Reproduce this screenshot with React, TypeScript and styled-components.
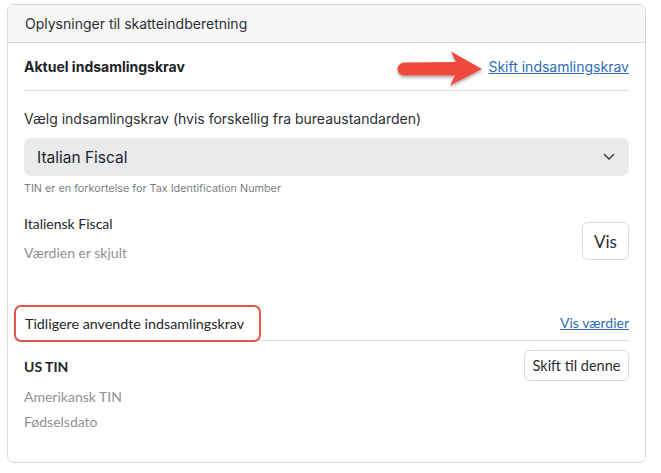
import React from "react";
import styled, { createGlobalStyle } from "styled-components";

const Global = createGlobalStyle`
  html, body { margin: 0; padding: 0; background: #ffffff; }
  body { font-family: Inter, "Noto Sans", sans-serif; color: #1f2328; }
`;

const Page = styled.div`
  padding: 4px 15px 10px 7px;
`;

const Card = styled.div`
  border: 1px solid #d6d8db;
  border-radius: 7px;
  background: #fff;
  overflow: hidden;
  height: 459px;
  box-sizing: border-box;
`;

const Header = styled.div`
  background: #f7f7f8;
  border-bottom: 1px solid #d6d8db;
  height: 37px;
  display: flex;
  align-items: center;
  padding-left: 17px;
  font-size: 14px;
  color: #2b2f33;
`;

const Body = styled.div`
  padding: 0 16px 0 16px;
`;

const TitleRow = styled.div`
  display: flex;
  justify-content: space-between;
  align-items: center;
  height: 47px;
  border-bottom: 1px solid #dcdee0;
  position: relative;
`;

const Strong = styled.div`
  font-weight: 700;
  font-size: 14px;
  color: #202428;
`;

const Link = styled.a<{ $lato?: boolean }>`
  color: #2d6db5;
  text-decoration: underline;
  font-size: 14px;
  font-family: ${(p) => (p.$lato ? 'Lato, "Noto Sans", sans-serif' : "inherit")};
  cursor: pointer;
  position: relative;
`;

const Arrow = styled.svg`
  position: absolute;
  left: 370px;
  top: 4px;
  overflow: visible;
`;

const FieldLabel = styled.div`
  font-size: 14px;
  color: #2b2f33;
  margin-top: 19px;
  height: 18px;
  line-height: 18px;
`;

const Select = styled.div`
  margin-top: 10px;
  height: 38px;
  border-radius: 7px;
  background: #e9eaec;
  display: flex;
  align-items: center;
  justify-content: space-between;
  padding: 0 14px 0 13px;
  font-size: 15.5px;
  color: #1f2328;
`;

const Hint = styled.div`
  font-size: 10.8px;
  color: #7b7f84;
  margin-top: 7px;
  height: 12px;
  line-height: 12px;
`;

const Lower = styled.div`
  font-family: Lato, "Noto Sans", sans-serif;
`;

const ValueRow = styled.div`
  display: flex;
  justify-content: space-between;
  align-items: flex-start;
  margin-top: 20px;
  height: 81px;
`;

const Stack = styled.div`
  display: flex;
  flex-direction: column;
`;

const ItemTitle = styled.div<{ $bold?: boolean }>`
  font-size: 14px;
  font-weight: ${(p) => (p.$bold ? 700 : 400)};
  color: #23272b;
  height: 18px;
  line-height: 18px;
`;

const Muted = styled.div<{ $gap?: number }>`
  font-size: 14px;
  color: #8e9296;
  margin-top: ${(p) => p.$gap ?? 11}px;
  height: 18px;
  line-height: 18px;
`;

const Button = styled.button<{ $size?: number }>`
  font-family: Lato, "Noto Sans", sans-serif;
  font-size: ${(p) => p.$size ?? 14}px;
  color: #2a2e32;
  background: #fff;
  border: 1px solid #d7d9dc;
  border-radius: 6px;
  padding: 0 10px;
  cursor: pointer;
`;

const VisButton = styled(Button)`
  width: 47px;
  height: 38px;
  margin-top: 7px;
  padding: 0;
`;

const SwitchButton = styled(Button)`
  height: 31px;
  width: 105px;
  padding: 0;
`;

const PrevRow = styled.div`
  display: flex;
  justify-content: space-between;
  align-items: center;
  border-bottom: 1px solid #dcdee0;
  height: 35px;
  margin-top: 9px;
  margin-left: -10px;
`;

const Highlight = styled.div`
  border: 2px solid #e2574c;
  border-radius: 7px;
  height: 37px;
  box-sizing: border-box;
  width: 247px;
  display: flex;
  align-items: center;
  padding-left: 9px;
  font-size: 14.3px;
  color: #23272b;
  margin-bottom: -1px;
  align-self: flex-start;
  background: #fff;
  position: relative;
`;

const HistoryRow = styled.div`
  display: flex;
  justify-content: space-between;
  align-items: flex-start;
  margin-top: 9px;
`;

const HistoryText = styled(Stack)`
  padding-top: 8px;
`;

function Chevron() {
  return (
    <svg width="12" height="8" viewBox="0 0 12 8" fill="none">
      <path d="M1.5 1.5 L6 6 L10.5 1.5" stroke="#3a3e42" strokeWidth="1.5" strokeLinecap="round" strokeLinejoin="round" />
    </svg>
  );
}

export default function App() {
  return (
    <>
      <Global />
      <Page>
        <Card>
          <Header>Oplysninger til skatteindberetning</Header>
          <Body>
            <TitleRow>
              <Strong>Aktuel indsamlingskrav</Strong>
              <Link>Skift indsamlingskrav</Link>
              <Arrow width="96" height="46" viewBox="0 0 96 46">
                <defs>
                  <filter id="sh" x="-20%" y="-30%" width="140%" height="170%">
                    <feDropShadow dx="0" dy="2" stdDeviation="1.6" floodColor="#000" floodOpacity="0.35" />
                  </filter>
                </defs>
                <path
                  d="M10 15.5 L62 15 L57 4.5 L88 22 L56 38.5 L61 28.5 L10 28.5 A6.5 6.5 0 0 1 10 15.5 Z"
                  fill="#ef4a3c"
                  filter="url(#sh)"
                />
              </Arrow>
            </TitleRow>
            <FieldLabel>Vælg indsamlingskrav (hvis forskellig fra bureaustandarden)</FieldLabel>
            <Select>
              <span>Italian Fiscal</span>
              <Chevron />
            </Select>
            <Hint>TIN er en forkortelse for Tax Identification Number</Hint>
            <Lower>
              <ValueRow>
                <Stack>
                  <ItemTitle>Italiensk Fiscal</ItemTitle>
                  <Muted>Værdien er skjult</Muted>
                </Stack>
                <VisButton $size={17}>Vis</VisButton>
              </ValueRow>
              <PrevRow>
                <Highlight>Tidligere anvendte indsamlingskrav</Highlight>
                <Link $lato>Vis værdier</Link>
              </PrevRow>
              <HistoryRow>
                <HistoryText>
                  <ItemTitle $bold>US TIN</ItemTitle>
                  <Muted $gap={12}>Amerikansk TIN</Muted>
                  <Muted $gap={7}>Fødselsdato</Muted>
                </HistoryText>
                <SwitchButton $size={14.5}>Skift til denne</SwitchButton>
              </HistoryRow>
            </Lower>
          </Body>
        </Card>
      </Page>
    </>
  );
}
